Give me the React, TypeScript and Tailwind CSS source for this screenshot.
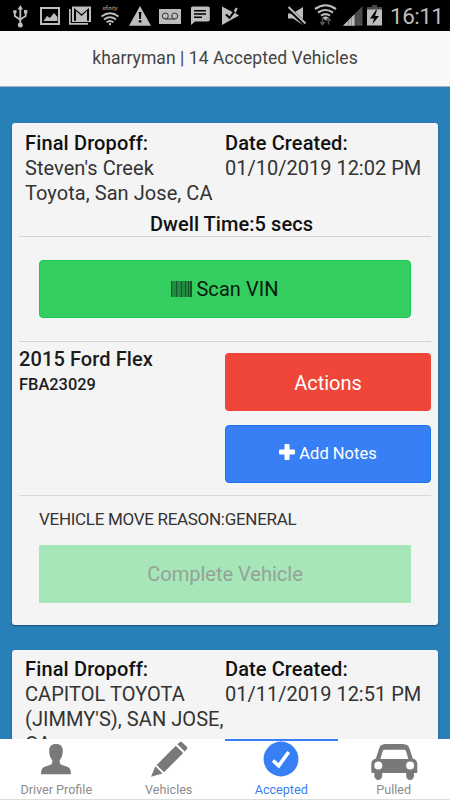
import React from 'react';

interface Job {
  id: number;
  dropoff: string[];
  created: string;
}

interface Tab {
  label: string;
  icon: React.ReactNode;
  active?: boolean;
}

const jobs: Job[] = [
  { id: 1, dropoff: ["Steven's Creek", 'Toyota, San Jose, CA'], created: '01/10/2019 12:02 PM' },
  { id: 2, dropoff: ['CAPITOL TOYOTA', "(JIMMY'S), SAN JOSE,", 'CA'], created: '01/11/2019 12:51 PM' },
];

const tabs: Tab[] = [
  { label: 'Driver Profile', icon: <PersonIcon /> },
  { label: 'Vehicles', icon: <PencilIcon /> },
  { label: 'Accepted', icon: <CheckIcon />, active: true },
  { label: 'Pulled', icon: <CarIcon /> },
];

function PersonIcon() {
  return (
    <svg width="76" height="40" viewBox="0 0 76 40" fill="currentColor">
      <path d="M38 4c-4.800 0-7 2.800-6.800 7.200.1 3.400.9 6.500 3 8.800.4 2.900-.1 4.200-2.200 5.100l-5.200 1.700c-3.200 1.200-3.600 3.400-3.800 7.500h30c-.2-4.100-.6-6.300-3.800-7.500L44 25.100c-2.100-.9-2.600-2.200-2.200-5.100 2.100-2.300 2.900-5.400 3-8.800C45 6.800 42.800 4 38 4z" />
    </svg>
  );
}

function PencilIcon() {
  return (
    <svg width="76" height="40" viewBox="0 0 76 40" fill="currentColor">
      <path d="M46.300 4.300l2-1.900c1-.8 2.100-.8 3.100 0l4.200 4.100c.9 1 .9 2 0 3l-1.900 2zM44.800 5.800l7.400 7.200L33 32.300 25.700 25zM24.400 26.300l7.100 7.300L20 36.700z" />
    </svg>
  );
}

function CheckIcon() {
  return (
    <svg width="76" height="40" viewBox="0 0 76 40">
      <circle cx="38" cy="19" r="17.400" fill="currentColor" />
      <path d="M30 20.500l5.700 5.300L45.700 12" fill="none" stroke="#fff" strokeWidth="3.600" />
    </svg>
  );
}

function CarIcon() {
  return (
    <svg width="76" height="40" viewBox="0 0 76 40" fill="currentColor" fillRule="evenodd">
      <path d="M31 4h15c4 0 6.400 1 7.300 4l3.400 10.500c3 .8 4.600 2.700 4.600 5.700v7.600c0 .8-.3 1.200-1.100 1.200H58v3c0 2.300-1.700 4-3.900 4s-3.900-1.700-3.900-4v-3H26.200v3c0 2.300-1.700 4-3.900 4s-3.900-1.700-3.900-4v-3h-2c-.8 0-1.100-.4-1.100-1.200v-7.600c0-3 1.600-4.900 4.600-5.700L23.300 8c.9-3 3.200-4 7.700-4zM29 9.800c-1.500 0-2 .3-2.300 1.300L24.400 19h27.900L50 11.100c-.3-1-.8-1.300-2.300-1.300zM22.300 21.500a4 4 0 100 8 4 4 0 000-8zM54.100 21.500a4 4 0 100 8 4 4 0 000-8z" />
    </svg>
  );
}

function PlusIcon() {
  return (
    <svg width="16" height="16" viewBox="0 0 16 16" fill="#fff" className="mb-1.5">
      <rect x="5.500" width="5" height="16" rx="1" />
      <rect y="5.500" width="16" height="5" rx="1" />
    </svg>
  );
}

function Barcode() {
  return (
    <svg width="21" height="16" viewBox="0 0 21 16" className="mr-1 mb-px" fill="#0c3a1b">
      <rect width="21" height="16" opacity=".45" />
      <path d="M0 0h1v16H0zM5 0h1v16H5zM10 0h1v16h-1zM14 0h1v16h-1zM17 0h1v16h-1zM19 0h2v16h-2z" opacity=".65" />
    </svg>
  );
}

const StatusBar = () => (
  <div className="h-[31px] shrink-0 bg-black">
    <svg width="450" height="31" viewBox="0 0 450 31" fill="#bdbdbd" stroke="none">
      {/* usb */}
      <g stroke="#bdbdbd" strokeWidth="1.800" fill="none">
        <path d="M20.300 8v17M14.800 12.500v3.500l5.500 4M25.700 12.500v3.500l-5.400 3.500" />
      </g>
      <path d="M20.300 5l2.700 4.500h-5.400zM24 10h3.300v3.400H24z" />
      <circle cx="14.900" cy="11.800" r="1.900" />
      <circle cx="20.300" cy="25" r="2.500" />
      {/* picture */}
      <path fillRule="evenodd" d="M40 7h20v18H40zM42 9v14h16V9z" />
      <path d="M43.500 21l3.500-5 3 2 4-5 3.500 4v4z" />
      {/* mail */}
      <path d="M69 9h1.700v14H88v1.800H69z" />
      <path fillRule="evenodd" d="M72 6.500h19V22H72zM74 8v12.700h2V11l5.600 5L87 11v9.700h2V8l-7.400 6.200z" />
      {/* hotspot */}
      <text x="102.500" y="9.500" fontSize="5.500" textLength="15" fontStyle="italic" className="font-['Roboto']">xfinity</text>
      <g stroke="#bdbdbd" strokeWidth="1.900" fill="none">
        <path d="M101.500 16.500q8.500-6.500 17 0M104 19.500q6-4.500 12 0M106.500 22.300q3.500-2.600 7 0" />
      </g>
      <circle cx="110" cy="24" r="1.200" />
      {/* warning */}
      <path d="M140 6l11 19.800h-22z" />
      <path d="M138.800 12h2.600l-.5 7h-1.600zM138.800 20.300h2.600v2.300h-2.600z" fill="#000" />
      {/* voicemail */}
      <path d="M159 9h22v15h-22z" />
      <g stroke="#333" strokeWidth="1" fill="none">
        <circle cx="165.300" cy="16" r="3" />
        <circle cx="174.700" cy="16" r="3" />
        <path d="M165.300 19h9.400" />
      </g>
      {/* message */}
      <path fillRule="evenodd" d="M192.500 6.500H208q1.800 0 1.800 1.800v11.500q0 1.700-1.800 1.700h-13L191 25V8q0-1.500 1.500-1.500zM194 10v1.500h12V10zm0 3.300v1.500h12v-1.500zm0 3.300V18h8v-1.400z" />
      {/* play check */}
      <path d="M222 6.500l11 5.700 2.700-4.700 2 1.300-2.400 4.500L239 15.500 222 25z" />
      <path d="M226 14.500l3.500 3.300 5-6.500" stroke="#000" strokeWidth="2" fill="none" />
      {/* muted speaker */}
      <path d="M288 13.500h4.500L303 7v18l-10-6.500h-5z" />
      <path d="M287.500 7.500l18 17" stroke="#000" strokeWidth="4" />
      <path d="M288.500 7l17 16.500" stroke="#bdbdbd" strokeWidth="2" />
      {/* wifi */}
      <g stroke="#bdbdbd" strokeWidth="2.200" fill="none">
        <path d="M315 9q10.500-7.500 21 0M318 12.500q7.500-5 15 0M321 15.700q4.500-3 9 0" />
      </g>
      <path d="M322.500 17.500q3-2 6 0l-3 3z" />
      <path d="M322.500 18v6M320.300 22l2.200 2.500 2.200-2.500M328.500 24.500v-6M326.300 20.800l2.200-2.500 2.200 2.500" stroke="#555" strokeWidth="1.500" fill="none" />
      {/* signal */}
      <path d="M343 25.700L362.500 6v19.700z" fill="#4a4a4a" />
      <path d="M343 25.700l11.500-11.500v11.500z" />
      <path d="M348.500 20v6M351.500 17v9" stroke="#777" strokeWidth=".7" />
      {/* battery */}
      <path d="M372 5h5v2h5v3h-15V7h5z" fill="#4a4a4a" />
      <path d="M367 9.500h15v16h-15z" />
      <path d="M376 10l-6 8.500h4l-1.500 5.500 6.500-8h-4l2-6z" fill="#000" />
      <text x="390" y="23.500" fontSize="22.500" textLength="54" className="font-['Roboto']">16:11</text>
    </svg>
  </div>
);

const JobHeader: React.FC<{ job: Job }> = ({ job }) => (
  <div className="flex pl-[13px] text-[20px] leading-[25px] whitespace-nowrap">
    <div className="w-[200px]">
      <h2 className="font-medium tracking-[0.14px] text-[#111]">Final Dropoff:</h2>
      {job.dropoff.map((line) => (
        <p key={line} className="tracking-[0.06px]">{line}</p>
      ))}
    </div>
    <div>
      <h2 className="font-medium tracking-[0.1px] text-[#111]">Date Created:</h2>
      <p>{job.created}</p>
    </div>
  </div>
);

const cardClass = 'mx-3 shrink-0 rounded-[3px] bg-[#f4f4f4] shadow-[0_1px_2px_rgba(0,0,0,0.4)]';

export default function App() {
  return (
    <div className="flex h-[800px] w-[450px] flex-col overflow-hidden bg-[#2980b9] font-['Roboto','Noto_Sans',sans-serif] text-[#333]">
      <StatusBar />
      <header className="flex h-[56px] shrink-0 items-center justify-center border-b border-[#a5b3bd] bg-[#f8f8f8] text-[17.500px] tracking-[0.06px] text-[#444]">
        kharryman | 14 Accepted Vehicles
      </header>

      <main className="flex min-h-0 flex-1 flex-col gap-[25px] overflow-hidden pt-9">
        <section className={`${cardClass} h-[502px] pt-2`}>
          <JobHeader job={jobs[0]} />
          <div className="mx-[7px]">
            <p className="mt-[6px] h-[25px] border-b border-[#d5d5d5] pl-[13px] text-center text-[20px] leading-[25px] font-medium tracking-[0.06px] text-[#111]">Dwell Time:5 secs</p>
            <div className="border-b border-[#d5d5d5] px-5 pt-[23px] pb-[23px]">
              <button className="flex h-[58px] w-full items-center justify-center rounded-[4px] border border-[#1bc854] bg-[#35ce61] text-[20px] tracking-[0.06px] text-[#081a0c]">
                <Barcode />
                Scan VIN
              </button>
            </div>
            <div className="flex h-[154px] justify-between border-b border-[#d8d8d8] pt-[11px]">
              <div className="-mt-[7px] font-medium text-[#1c1c1c]">
                <h3 className="text-[20px] leading-[26px] tracking-[0.1px]">2015 Ford Flex</h3>
                <p className="text-[16.400px] leading-[25px]">FBA23029</p>
              </div>
              <div className="flex w-[206px] flex-col gap-[13.500px] text-white">
                <button className="h-[58px] rounded-[4px] bg-[#f04639] pt-0.5 text-[20px]">Actions</button>
                <button className="flex h-[58px] items-center justify-center gap-1 rounded-[4px] border border-[#1e73f0] bg-[#387ff5] pt-0.5 text-[16.500px]">
                  <PlusIcon />
                  Add Notes
                </button>
              </div>
            </div>
            <div className="px-5 pt-[11px]">
              <p className="text-[17px] leading-6 tracking-[-0.3px]">VEHICLE MOVE REASON:GENERAL</p>
              <button className="mt-[14px] h-[58px] w-full bg-[#a7e6b9] text-[20px] text-[#94a298]">Complete Vehicle</button>
            </div>
          </div>
        </section>
        <section className={`${cardClass} h-[502px] pt-[7px]`}>
          <JobHeader job={jobs[1]} />
        </section>
      </main>

      <nav className="flex h-[61px] shrink-0 border-b border-[#ddd] bg-white">
        {tabs.map((tab) => (
          <button
            key={tab.label}
            className={`flex flex-1 flex-col items-center border-t-2 text-[12.600px] leading-[20px] ${tab.active ? 'border-[#387ff5] text-[#387ff5]' : 'border-white text-[#8c8c8c]'}`}
          >
            <span className={tab.active ? '-mt-px h-10' : '-mt-px h-10 text-[#797979]'}>{tab.icon}</span>
            {tab.label}
          </button>
        ))}
      </nav>
    </div>
  );
}
